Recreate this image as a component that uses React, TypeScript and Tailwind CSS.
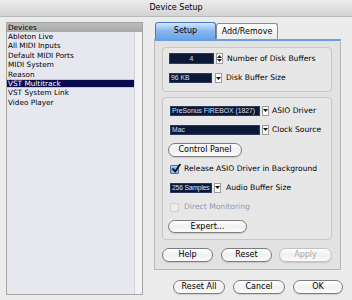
import React from "react";

const devices = [
  "Ableton Live",
  "All MIDI Inputs",
  "Default MIDI Ports",
  "MIDI System",
  "Reason",
  "VST Multitrack",
  "VST System Link",
  "Video Player",
];

function DropArrow() {
  return (
    <div className="flex h-[10px] w-[7px] items-center justify-center border border-[#9c9c9c] bg-white">
      <svg width="5" height="3" viewBox="0 0 5 3">
        <path d="M0 0h5L2.5 3z" fill="#111" />
      </svg>
    </div>
  );
}

function Spinner() {
  return (
    <div className="flex h-[11px] w-[7px] flex-col items-center justify-center gap-[1px] border border-[#9c9c9c] bg-white">
      <svg width="5" height="3" viewBox="0 0 5 3">
        <path d="M0 3h5L2.5 0z" fill="#222" />
      </svg>
      <svg width="5" height="3" viewBox="0 0 5 3">
        <path d="M0 0h5L2.5 3z" fill="#222" />
      </svg>
    </div>
  );
}

function Field({ className, children }: { className: string; children: React.ReactNode }) {
  return (
    <div
      className={`flex items-center overflow-hidden whitespace-nowrap border border-[#2c3a5c] bg-[#0b1838] px-[1px] font-['Liberation_Sans',sans-serif] text-[6.8px] leading-[8px] text-[#d6e0f2] ${className}`}
    >
      {children}
    </div>
  );
}

function AquaButton({
  className,
  disabled,
  children,
}: {
  className: string;
  disabled?: boolean;
  children: React.ReactNode;
}) {
  return (
    <div
      className={`flex items-center justify-center rounded-full border bg-gradient-to-b from-white via-[#f0f0f0] to-[#fbfbfb] text-[8px] leading-none shadow-[0_1px_1px_rgba(0,0,0,0.12)] ${
        disabled ? "border-[#c2c2c2] text-[#a8a8a8]" : "border-[#7c7c7c] text-black"
      } ${className}`}
    >
      {children}
    </div>
  );
}

function CheckBox({ checked, disabled }: { checked?: boolean; disabled?: boolean }) {
  if (disabled) {
    return <div className="h-[9px] w-[9px] rounded-[1px] border border-[#cfcfcf] bg-[#ececec]" />;
  }
  return (
    <div className="relative h-[9px] w-[9px] rounded-[1px] border border-[#4a6fa8] bg-gradient-to-b from-[#b8d4f4] via-[#6fa2e4] to-[#9cc4f0]">
      {checked && (
        <svg className="absolute -top-[2px] left-[1px]" width="9" height="9" viewBox="0 0 9 9">
          <path d="M1 5l2.2 2.5L8 0.5" fill="none" stroke="#111" strokeWidth="1.8" strokeLinecap="round" />
        </svg>
      )}
    </div>
  );
}

export default function App() {
  return (
    <div className="flex h-[300px] w-[352px] flex-col overflow-hidden bg-[#ececec] font-['DejaVu_Sans',sans-serif] text-black">
      <div className="flex h-[17px] shrink-0 items-center justify-center border-b border-[#b9b9b9] bg-gradient-to-b from-[#ececec] to-[#d3d3d3] text-[8px]">
        Device Setup
      </div>

      <div className="flex pt-[5px]">
        {/* device list */}
        <div className="ml-[6px] flex h-[273px] w-[137px] flex-col border border-[#a4a4a4] bg-[#e7e7ef]">
          <div className="flex h-[9px] shrink-0 items-center bg-gradient-to-b from-[#bcbcbc] to-[#a9a9a9] pl-[1px] text-[7.3px] leading-none">
            Devices
          </div>
          <div className="flex flex-1">
            <div className="flex flex-1 flex-col">
              {devices.map((d) => (
                <div
                  key={d}
                  className={`flex h-[9.4px] items-center pl-[1px] text-[7.3px] leading-none ${
                    d === "VST Multitrack"
                      ? "border-y border-[#8fdcea] bg-[#0a0a4e] text-white"
                      : ""
                  }`}
                >
                  {d}
                </div>
              ))}
            </div>
            <div className="w-[8px] border-l border-[#d4d4dc] bg-[#f3f3f5]" />
          </div>
        </div>

        {/* right side */}
        <div className="ml-[11px] flex w-[189px] flex-col">
          <div className="flex h-[17px] items-end pl-[1px]">
            <div className="flex h-[17px] w-[61px] items-center justify-center rounded-t-[3px] border border-b-0 border-[#4c7cc0] bg-gradient-to-b from-[#d4e6fa] via-[#86b6ee] to-[#6aa4ea] text-[8px] leading-none">
              Setup
            </div>
            <div className="flex h-[16px] w-[62px] items-center justify-center rounded-t-[3px] border border-b-0 border-[#8c8c8c] bg-gradient-to-b from-white to-[#ececec] text-[8px] leading-none">
              Add/Remove
            </div>
          </div>

          <div className="flex h-[231px] w-[187px] flex-col border-x border-b border-t-2 border-[#b8b8b8] border-t-[#6e9ee2] bg-[#e2e2e2] pl-[7px] pt-[6px]">
            {/* group 1 */}
            <div className="flex w-[170px] flex-col rounded-[4px] border border-[#c7c7c7] bg-[#e7e7e7] pb-[3px] pl-[6px] pt-[1px]">
              <div className="flex h-[19px] items-center">
                <Field className="h-[11px] w-[45px] justify-center">4</Field>
                <div className="ml-[2px]">
                  <Spinner />
                </div>
                <span className="ml-[4px] text-[7.6px]">Number of Disk Buffers</span>
              </div>
              <div className="flex h-[20px] items-center">
                <Field className="h-[10px] w-[43px]">96 KB</Field>
                <div className="ml-[3px]">
                  <DropArrow />
                </div>
                <span className="ml-[4px] text-[7.6px]">Disk Buffer Size</span>
              </div>
            </div>

            {/* group 2 */}
            <div className="mt-[5px] flex w-[170px] flex-col rounded-[4px] border border-[#c7c7c7] bg-[#e7e7e7] pb-[3px] pl-[7px] pt-[3px]">
              <div className="flex h-[19px] items-center">
                <Field className="h-[10px] w-[90px]">PreSonus FIREBOX (1827)</Field>
                <div className="ml-[2px]">
                  <DropArrow />
                </div>
                <span className="ml-[3px] text-[7.6px]">ASIO Driver</span>
              </div>
              <div className="flex h-[19px] items-center">
                <Field className="h-[10px] w-[90px]">Mac</Field>
                <div className="ml-[2px]">
                  <DropArrow />
                </div>
                <span className="ml-[3px] text-[7.6px]">Clock Source</span>
              </div>
              <div className="flex h-[21px] items-center">
                <AquaButton className="-ml-[2px] h-[14px] w-[74px]">Control Panel</AquaButton>
              </div>
              <div className="flex h-[18px] items-center">
                <CheckBox checked />
                <span className="ml-[5px] text-[7.6px]">Release ASIO Driver in Background</span>
              </div>
              <div className="flex h-[19px] items-center">
                <Field className="h-[10px] w-[42px] tracking-[-0.2px]">256 Samples</Field>
                <div className="ml-[2px]">
                  <DropArrow />
                </div>
                <span className="ml-[5px] text-[7.6px]">Audio Buffer Size</span>
              </div>
              <div className="flex h-[20px] items-center">
                <CheckBox disabled />
                <span className="ml-[5px] text-[7.6px] text-[#8f9ab4]">Direct Monitoring</span>
              </div>
              <div className="flex h-[19px] items-center">
                <AquaButton className="-ml-[2px] h-[13px] w-[79px]">Expert...</AquaButton>
              </div>
            </div>

            <div className="mt-[8px] flex w-[170px] gap-[8px]">
              <AquaButton className="h-[14px] w-[51px]">Help</AquaButton>
              <AquaButton className="h-[14px] w-[51px]">Reset</AquaButton>
              <AquaButton className="ml-[-1px] h-[14px] w-[53px]" disabled>
                Apply
              </AquaButton>
            </div>
          </div>

          <div className="mt-[10px] flex justify-end gap-[8px]">
            <AquaButton className="h-[14px] w-[52px]">Reset All</AquaButton>
            <AquaButton className="h-[14px] w-[52px]">Cancel</AquaButton>
            <AquaButton className="h-[14px] w-[50px]">OK</AquaButton>
          </div>
        </div>
      </div>
    </div>
  );
}
